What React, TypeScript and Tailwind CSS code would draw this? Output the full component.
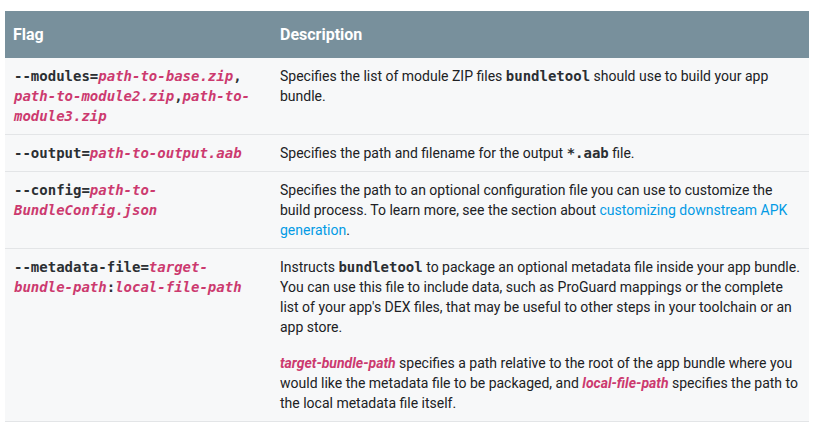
import React from "react";

const mono = "font-['DejaVu_Sans_Mono',monospace]";

function V({ children }: { children: React.ReactNode }) {
  return <i className="font-bold text-[#cc3a6f]">{children}</i>;
}

function Code({ children }: { children: React.ReactNode }) {
  return <code className={`${mono} text-[14px] font-bold text-[#2b2f33]`}>{children}</code>;
}

function Row({ flag, children }: { flag: React.ReactNode; children: React.ReactNode }) {
  return (
    <tr className="bg-[#f7f8f9] border-b border-[#e3e5e7] align-top">
      <td className={`px-[9px] py-2 ${mono} text-[14px] leading-5 font-semibold text-[#2b2f33] break-words`}>{flag}</td>
      <td className="px-2 py-2 text-[14px] leading-5 text-[#202124]">{children}</td>
    </tr>
  );
}

export default function App() {
  return (
    <div className="w-[817px] h-[446px] bg-white pt-[11px] pl-[5px] font-['Roboto',sans-serif]">
      <table className="w-[804px] border-collapse table-fixed">
        <colgroup>
          <col className="w-[267px]" />
          <col />
        </colgroup>
        <thead>
          <tr className="bg-[#78909c] h-[47px]">
            <th className="px-2 text-left text-[16px] font-bold text-white">Flag</th>
            <th className="px-2 text-left text-[16px] font-bold text-white">Description</th>
          </tr>
        </thead>
        <tbody>
          <Row
            flag={
              <>
                --modules=<V>path-to-base.zip</V>, <V>path-to-module2.zip</V>,<V>path-to-module3.zip</V>
              </>
            }
          >
            Specifies the list of module ZIP files <Code>bundletool</Code> should use to build your app bundle.
          </Row>
          <Row
            flag={
              <>
                --output=<V>path-to-output.aab</V>
              </>
            }
          >
            Specifies the path and filename for the output <Code>*.aab</Code> file.
          </Row>
          <Row
            flag={
              <>
                --config=<V>path-to-BundleConfig.json</V>
              </>
            }
          >
            Specifies the path to an optional configuration file you can use to customize the build process. To learn
            more, see the section about{" "}
            <a className="text-[#039be5]" href="#">
              customizing downstream APK generation
            </a>
            .
          </Row>
          <Row
            flag={
              <>
                --metadata-file=<V>target-bundle-path</V>:<V>local-file-path</V>
              </>
            }
          >
            <p>
              Instructs <Code>bundletool</Code> to package an optional metadata file inside your app bundle. You can use
              this file to include data, such as ProGuard mappings or the complete list of your app's DEX files, that may
              be useful to other steps in your toolchain or an app store.
            </p>
            <p className="mt-4">
              <i className="font-bold text-[#cc3a6f]">target-bundle-path</i> specifies a path relative to the root of the
              app bundle where you would like the metadata file to be packaged, and{" "}
              <i className="font-bold text-[#cc3a6f]">local-file-path</i> specifies the path to the local metadata file
              itself.
            </p>
          </Row>
        </tbody>
      </table>
    </div>
  );
}
